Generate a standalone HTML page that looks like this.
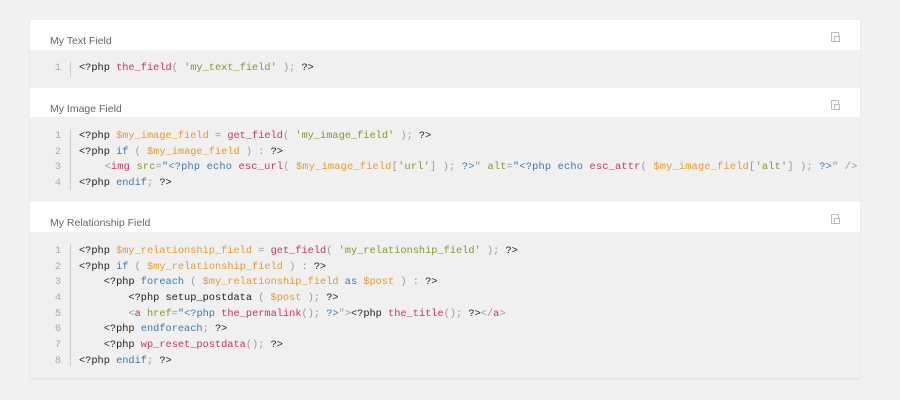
<!DOCTYPE html>
<html><head><style>
body{margin:0;background:#f1f1f1;width:900px;height:400px;overflow:hidden;font-family:"Liberation Sans",sans-serif}
.card{position:absolute;left:30px;top:20px;width:830px;box-shadow:0 1px 2px rgba(0,0,0,.08);background:#f0f0f0}
.h{background:#fff;height:30px;position:relative;font-size:10.5px;color:#666}
.h span{position:absolute;left:20px;top:15px}
.h i{position:absolute;right:21px;top:12px;width:6px;height:8px;border:1px solid #bbb;border-radius:1px}
.h i:after{content:"";position:absolute;left:2px;top:3px;width:4px;height:4px;border:1px solid #bbb;background:#fff}
.c{position:relative;padding:12px 0 0 0;box-sizing:border-box;font-family:"Liberation Mono",monospace;font-size:10.3px;line-height:15.7px;color:#222}
.l{position:relative;height:15.7px;white-space:pre}
.n{position:absolute;left:17px;width:14px;text-align:right;color:#aaa}
.t{position:absolute;left:49px}
.bar{position:absolute;left:40px;width:1px;background:#ccc;top:12px;bottom:12px}
.f{color:#c8365f}.s{color:#7b9c2d}.v{color:#e39a2f}.k{color:#3d78ad}.p{color:#999}
</style></head><body>
<div class="card">
<div class="h"><span>My Text Field</span><i></i></div>
<div class="c" style="height:38px;padding-top:11px"><div class="bar" style="top:11px;bottom:11px"></div>
<div class="l"><span class="n">1</span><span class="t">&lt;?php <span class="f">the_field</span><span class="p">(</span> <span class="s">'my_text_field'</span> <span class="p">);</span> ?&gt;</span></div>
</div>
<div class="h" style="height:29px"><span>My Image Field</span><i></i></div>
<div class="c" style="height:85px"><div class="bar"></div>
<div class="l"><span class="n">1</span><span class="t">&lt;?php <span class="v">$my_image_field</span> <span class="p">=</span> <span class="f">get_field</span><span class="p">(</span> <span class="s">'my_image_field'</span> <span class="p">);</span> ?&gt;</span></div>
<div class="l"><span class="n">2</span><span class="t">&lt;?php <span class="k">if</span> <span class="p">(</span> <span class="v">$my_image_field</span> <span class="p">) :</span> ?&gt;</span></div>
<div class="l"><span class="n">3</span><span class="t" style="letter-spacing:0.2px">    <span class="p">&lt;</span><span class="f">img</span> <span class="s">src</span><span class="p">=</span><span class="k">"&lt;?php echo</span> <span class="f">esc_url</span><span class="p">(</span> <span class="v">$my_image_field</span><span class="p">[</span><span class="s">'url'</span><span class="p">] );</span> <span class="k">?&gt;</span><span class="p">"</span> <span class="s">alt</span><span class="p">=</span><span class="k">"&lt;?php echo</span> <span class="f">esc_attr</span><span class="p">(</span> <span class="v">$my_image_field</span><span class="p">[</span><span class="s">'alt'</span><span class="p">] );</span> <span class="k">?&gt;</span><span class="p">" /&gt;</span></span></div>
<div class="l"><span class="n">4</span><span class="t">&lt;?php <span class="k">endif</span><span class="p">;</span> ?&gt;</span></div>
</div>
<div class="h"><span>My Relationship Field</span><i></i></div>
<div class="c" style="height:146px"><div class="bar"></div>
<div class="l"><span class="n">1</span><span class="t">&lt;?php <span class="v">$my_relationship_field</span> <span class="p">=</span> <span class="f">get_field</span><span class="p">(</span> <span class="s">'my_relationship_field'</span> <span class="p">);</span> ?&gt;</span></div>
<div class="l"><span class="n">2</span><span class="t">&lt;?php <span class="k">if</span> <span class="p">(</span> <span class="v">$my_relationship_field</span> <span class="p">) :</span> ?&gt;</span></div>
<div class="l"><span class="n">3</span><span class="t">    &lt;?php <span class="k">foreach</span> <span class="p">(</span> <span class="v">$my_relationship_field</span> <span class="k">as</span> <span class="v">$post</span> <span class="p">) :</span> ?&gt;</span></div>
<div class="l"><span class="n">4</span><span class="t">        &lt;?php setup_postdata <span class="p">(</span> <span class="v">$post</span> <span class="p">);</span> ?&gt;</span></div>
<div class="l"><span class="n">5</span><span class="t">        <span class="p">&lt;</span><span class="f">a</span> <span class="s">href</span><span class="p">=</span><span class="k">"&lt;?php</span> <span class="f">the_permalink</span><span class="p">();</span> <span class="k">?&gt;</span><span class="p">"&gt;</span>&lt;?php <span class="f">the_title</span><span class="p">();</span> ?&gt;<span class="p">&lt;/</span><span class="f">a</span><span class="p">&gt;</span></span></div>
<div class="l"><span class="n">6</span><span class="t">    &lt;?php <span class="k">endforeach</span><span class="p">;</span> ?&gt;</span></div>
<div class="l"><span class="n">7</span><span class="t">    &lt;?php <span class="f">wp_reset_postdata</span><span class="p">();</span> ?&gt;</span></div>
<div class="l"><span class="n">8</span><span class="t">&lt;?php <span class="k">endif</span><span class="p">;</span> ?&gt;</span></div>
</div>
</div>
</body></html>
